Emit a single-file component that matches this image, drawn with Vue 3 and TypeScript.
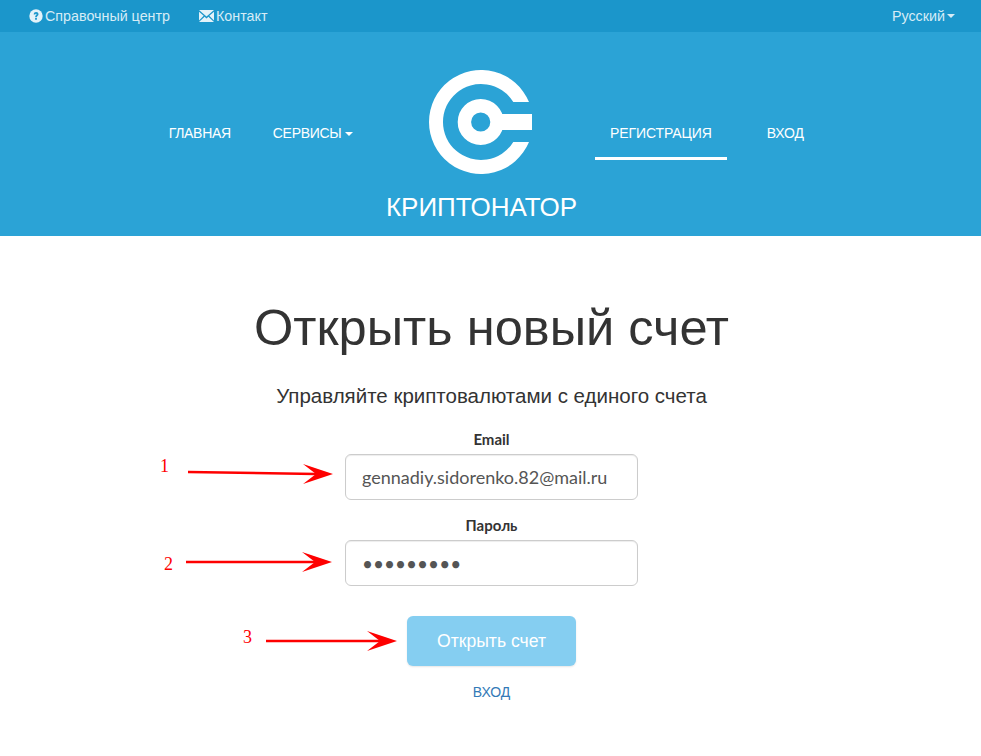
<script setup lang="ts">
interface Arrow { n: string; nx: number; ny: number; x1: number; y1: number; x2: number; y2: number }
const arrows: Arrow[] = [
  { n: '1', nx: 160, ny: 472, x1: 188, y1: 472, x2: 333, y2: 474 },
  { n: '2', nx: 164, ny: 570, x1: 186, y1: 562, x2: 332, y2: 562 },
  { n: '3', nx: 243, ny: 643, x1: 266, y1: 641, x2: 397, y2: 641 },
]
function head(a: Arrow): string {
  return `${a.x2},${a.y2} ${a.x2 - 30},${a.y2 - 10} ${a.x2 - 17},${a.y2} ${a.x2 - 30},${a.y2 + 10}`
}
</script>

<template>
  <div class="page">
    <div class="topbar">
      <div class="top-left">
        <a class="top-link">
          <svg class="ico" width="14" height="14" viewBox="0 0 14 14">
            <circle cx="7" cy="7" r="6.7" fill="#e3f2f9" />
            <path d="M4.7 5.4C4.8 3.9 5.8 3.1 7.1 3.1 8.5 3.1 9.5 4 9.5 5.2 9.5 6.8 7.9 6.9 7.9 8.2H6.1C6.1 6.3 7.6 6.2 7.6 5.3 7.6 4.9 7.4 4.7 7 4.7 6.6 4.7 6.4 5 6.3 5.5ZM6.1 9H7.9V10.8H6.1Z" fill="#1b96cb" />
          </svg>
          <span>Справочный центр</span>
        </a>
        <a class="top-link">
          <svg class="ico" width="15" height="12" viewBox="0 0 15 12">
            <path d="M0 0H15L7.5 6.4Z M0 1.8V10.5L4.7 5.8Z M15 1.8V10.5L10.3 5.8Z M0 12H15L9.4 6.8 7.5 8.4 5.6 6.8Z" fill="#e3f2f9" />
          </svg>
          <span>Контакт</span>
        </a>
      </div>
      <a class="top-link">Русский<i class="caret"></i></a>
    </div>

    <header class="head">
      <nav class="nav nav-left">
        <a class="nav-link">ГЛАВНАЯ</a>
        <a class="nav-link">СЕРВИСЫ <i class="caret caret-white"></i></a>
      </nav>
      <div class="brand">
        <svg class="logo" width="104" height="104" viewBox="0 0 104 104">
          <path d="M100 32A52 52 0 1 0 100 72H84.3A38 38 0 1 1 84.3 32Z" fill="#fff" />
          <circle cx="51.7" cy="52" r="16.3" fill="none" stroke="#fff" stroke-width="13.4" />
          <rect x="66" y="44" width="37" height="16" fill="#fff" />
        </svg>
        <div class="brand-name">КРИПТОНАТОР</div>
      </div>
      <nav class="nav nav-right">
        <a class="nav-link active">РЕГИСТРАЦИЯ</a>
        <a class="nav-link">ВХОД</a>
      </nav>
    </header>

    <main class="main">
      <h1 class="title">Открыть новый счет</h1>
      <p class="sub">Управляйте криптовалютами с единого счета</p>
      <form class="form" @submit.prevent>
        <label class="label" for="em">Email</label>
        <input id="em" class="input" type="text" value="gennadiy.sidorenko.82@mail.ru" readonly />
        <label class="label label-2" for="pw">Пароль</label>
        <input id="pw" class="input input-pw" type="password" value="123456789" readonly />
        <button class="btn" type="button">Открыть счет</button>
        <a class="login">ВХОД</a>
      </form>
    </main>

    <svg class="notes" width="981" height="756" viewBox="0 0 981 756">
      <g v-for="a in arrows" :key="a.n">
        <text class="num" :x="a.nx" :y="a.ny">{{ a.n }}</text>
        <line :x1="a.x1" :y1="a.y1" :x2="a.x2 - 17" :y2="a.y2" stroke="#fe0000" stroke-width="2.5" />
        <polygon :points="head(a)" fill="#fe0000" />
      </g>
    </svg>
  </div>
</template>

<style>
html, body { margin: 0; background: #fff; }
</style>

<style scoped>
.page {
  position: relative;
  width: 981px;
  height: 756px;
  overflow: hidden;
  font-family: "Liberation Sans", Arial, sans-serif;
  color: #333;
}
.topbar {
  height: 32px;
  box-sizing: border-box;
  padding: 0 26px 0 29px;
  background: #1b96cb;
  display: flex;
  justify-content: space-between;
  align-items: center;
  font-size: 14.3px;
}
.top-left { display: flex; gap: 29px; }
.top-link {
  display: flex;
  align-items: center;
  color: #d6ecf6;
}
.ico { margin-right: 2px; }
.caret {
  display: inline-block;
  width: 0;
  height: 0;
  margin-left: 2px;
  border-top: 4px solid #d6ecf6;
  border-left: 4px solid transparent;
  border-right: 4px solid transparent;
}
.caret-white { border-top-color: #fff; margin-left: 0; vertical-align: middle; }
.head {
  height: 204px;
  box-sizing: border-box;
  width: 963px;
  background: #2ba3d6;
  display: grid;
  grid-template-columns: 1fr 227px 1fr;
  box-shadow: 18px 0 0 #2ba3d6;
}
.nav {
  display: flex;
  align-items: flex-start;
  padding-top: 85px;
}
.nav-left { justify-content: flex-end; gap: 12px; letter-spacing: -0.3px; }
.nav-right { justify-content: flex-start; gap: 25px; letter-spacing: -0.1px; }
.nav-link {
  display: block;
  height: 43px;
  box-sizing: border-box;
  padding: 8px 15px 0;
  font-size: 14px;
  line-height: 16px;
  color: #fff;
}
.nav-link.active { border-bottom: 3px solid #fff; }
.brand {
  display: flex;
  flex-direction: column;
  align-items: center;
  padding-top: 38px;
}
.logo { margin-right: 1px; }
.brand-name {
  margin-top: 18px;
  font-size: 26px;
  line-height: 30px;
  color: #fff;
}
.main {
  display: flex;
  flex-direction: column;
  align-items: center;
  padding-left: 2px;
}
.title {
  margin: 63px 0 0;
  font-size: 50.6px;
  line-height: 58px;
  font-weight: 400;
  color: #333;
}
.sub {
  margin: 27px 0 0;
  font-size: 20.5px;
  line-height: 24px;
}
.form {
  margin-top: 21px;
  display: flex;
  flex-direction: column;
  align-items: center;
  font-family: Lato, "Liberation Sans", sans-serif;
}
.label {
  font-size: 15px;
  line-height: 20px;
  font-weight: 700;
  margin-bottom: 5px;
}
.label-2 { margin-top: 15px; }
.input {
  width: 293px;
  height: 46px;
  box-sizing: border-box;
  padding: 0 16px;
  border: 1px solid #ccc;
  border-radius: 6px;
  background: #fff;
  font-family: Lato, "Liberation Sans", sans-serif;
  font-size: 18px;
  color: #555;
  outline: none;
  box-shadow: inset 0 1px 1px rgba(0, 0, 0, 0.075);
}
.input-pw { font-size: 19px; }
.btn {
  margin-top: 30px;
  width: 169px;
  height: 50px;
  border: 0;
  border-radius: 6px;
  background: #85cef1;
  color: #fff;
  font-family: "Liberation Sans", Arial, sans-serif;
  font-size: 17.6px;
  box-shadow: 0 1px 2px rgba(0, 0, 0, 0.1);
}
.login {
  margin-top: 18px;
  font-family: "Liberation Sans", Arial, sans-serif;
  font-size: 14px;
  letter-spacing: -0.1px;
  line-height: 16px;
  color: #337ab7;
}
.notes {
  position: absolute;
  left: 0;
  top: 0;
  pointer-events: none;
}
.num {
  font-family: "Liberation Serif", serif;
  font-size: 18px;
  fill: #fe0000;
}
</style>
